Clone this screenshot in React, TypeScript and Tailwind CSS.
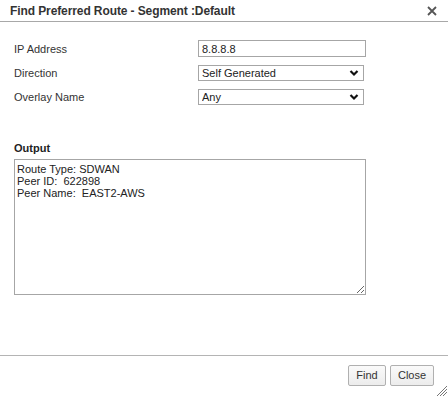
import { useState } from "react";

const FONT = "font-['Liberation_Sans',Arial,sans-serif]";

function Chevron() {
  return (
    <svg width="10" height="8" viewBox="0 0 10 8" className="pointer-events-none absolute right-[5px] top-[4px]">
      <path d="M1.5 2 L5 5.5 L8.5 2" fill="none" stroke="#111" strokeWidth="2.2" />
    </svg>
  );
}

function SelectBox({ value, options, width }: { value: string; options: string[]; width: string }) {
  const [current, setCurrent] = useState(value);
  return (
    <div className={`relative ${width}`}>
      <select
        value={current}
        onChange={(event) => setCurrent(event.target.value)}
        className={`${FONT} block h-[16px] w-full appearance-none border border-[#a6a6a6] bg-white pl-[3px] text-[11px] leading-[14px] text-[#222] outline-none`}
      >
        {options.map((option) => (
          <option key={option}>{option}</option>
        ))}
      </select>
      <Chevron />
    </div>
  );
}

export default function App() {
  const [ip, setIp] = useState("8.8.8.8");
  const output = "Route Type: SDWAN\nPeer ID:  622898\nPeer Name:  EAST2-AWS";

  return (
    <div className={`${FONT} relative flex h-[397px] w-[448px] flex-col overflow-hidden bg-white text-[#333]`}>
      <header className="flex h-[22px] items-center justify-between border-b border-[#a8a8a8] pl-[10px] pr-[9px]">
        <span className="text-[12px] font-bold tracking-[-0.1px] text-[#333]">Find Preferred Route - Segment :Default</span>
        <button type="button" className="flex h-[14px] w-[14px] items-center justify-center">
          <svg width="10" height="10" viewBox="0 0 10 10">
            <path d="M1 1 L9 9 M9 1 L1 9" stroke="#555" strokeWidth="1.8" />
          </svg>
        </button>
      </header>

      <div className="flex flex-1 flex-col px-[14px] pt-[18px]">
        <div className="grid grid-cols-[184px_1fr] gap-y-[8px] text-[11px]">
          <label className="flex h-[17px] items-center pt-[2px]">IP Address</label>
          <input
            value={ip}
            onChange={(event) => setIp(event.target.value)}
            className="h-[17px] w-[168px] border border-[#a6a6a6] px-[3px] text-[11px] text-[#222] outline-none"
          />
          <label className="flex h-[16px] items-center">Direction</label>
          <SelectBox value="Self Generated" options={["Self Generated", "Received"]} width="w-[166px]" />
          <label className="flex h-[16px] items-center">Overlay Name</label>
          <SelectBox value="Any" options={["Any"]} width="w-[166px]" />
        </div>

        <div className="mt-[35px] text-[11px] font-bold text-[#222]">Output</div>
        <textarea
          readOnly
          value={output}
          className="mt-[2px] h-[136px] w-[352px] resize border border-[#a6a6a6] px-[2px] pb-[2px] pt-[3px] text-[11px] leading-[12px] text-[#222] outline-none"
        />
      </div>

      <footer className="flex h-[42px] items-start justify-end gap-[4px] border-t border-[#b4b4b4] pr-[14px] pt-[9px]">
        <button
          type="button"
          className="h-[21px] w-[38px] rounded-[2px] border border-[#b0b0b0] bg-gradient-to-b from-[#fafafa] to-[#ececec] text-[11px] text-[#333]"
        >
          Find
        </button>
        <button
          type="button"
          className="h-[21px] w-[44px] rounded-[2px] border border-[#b0b0b0] bg-gradient-to-b from-[#fafafa] to-[#ececec] text-[11px] text-[#333]"
        >
          Close
        </button>
      </footer>

      <svg width="12" height="12" viewBox="0 0 12 12" className="absolute bottom-0 right-0">
        <path d="M11 1 L1 11 M11 4 L4 11 M11 7 L7 11" stroke="#777" strokeWidth="1" />
      </svg>
    </div>
  );
}
